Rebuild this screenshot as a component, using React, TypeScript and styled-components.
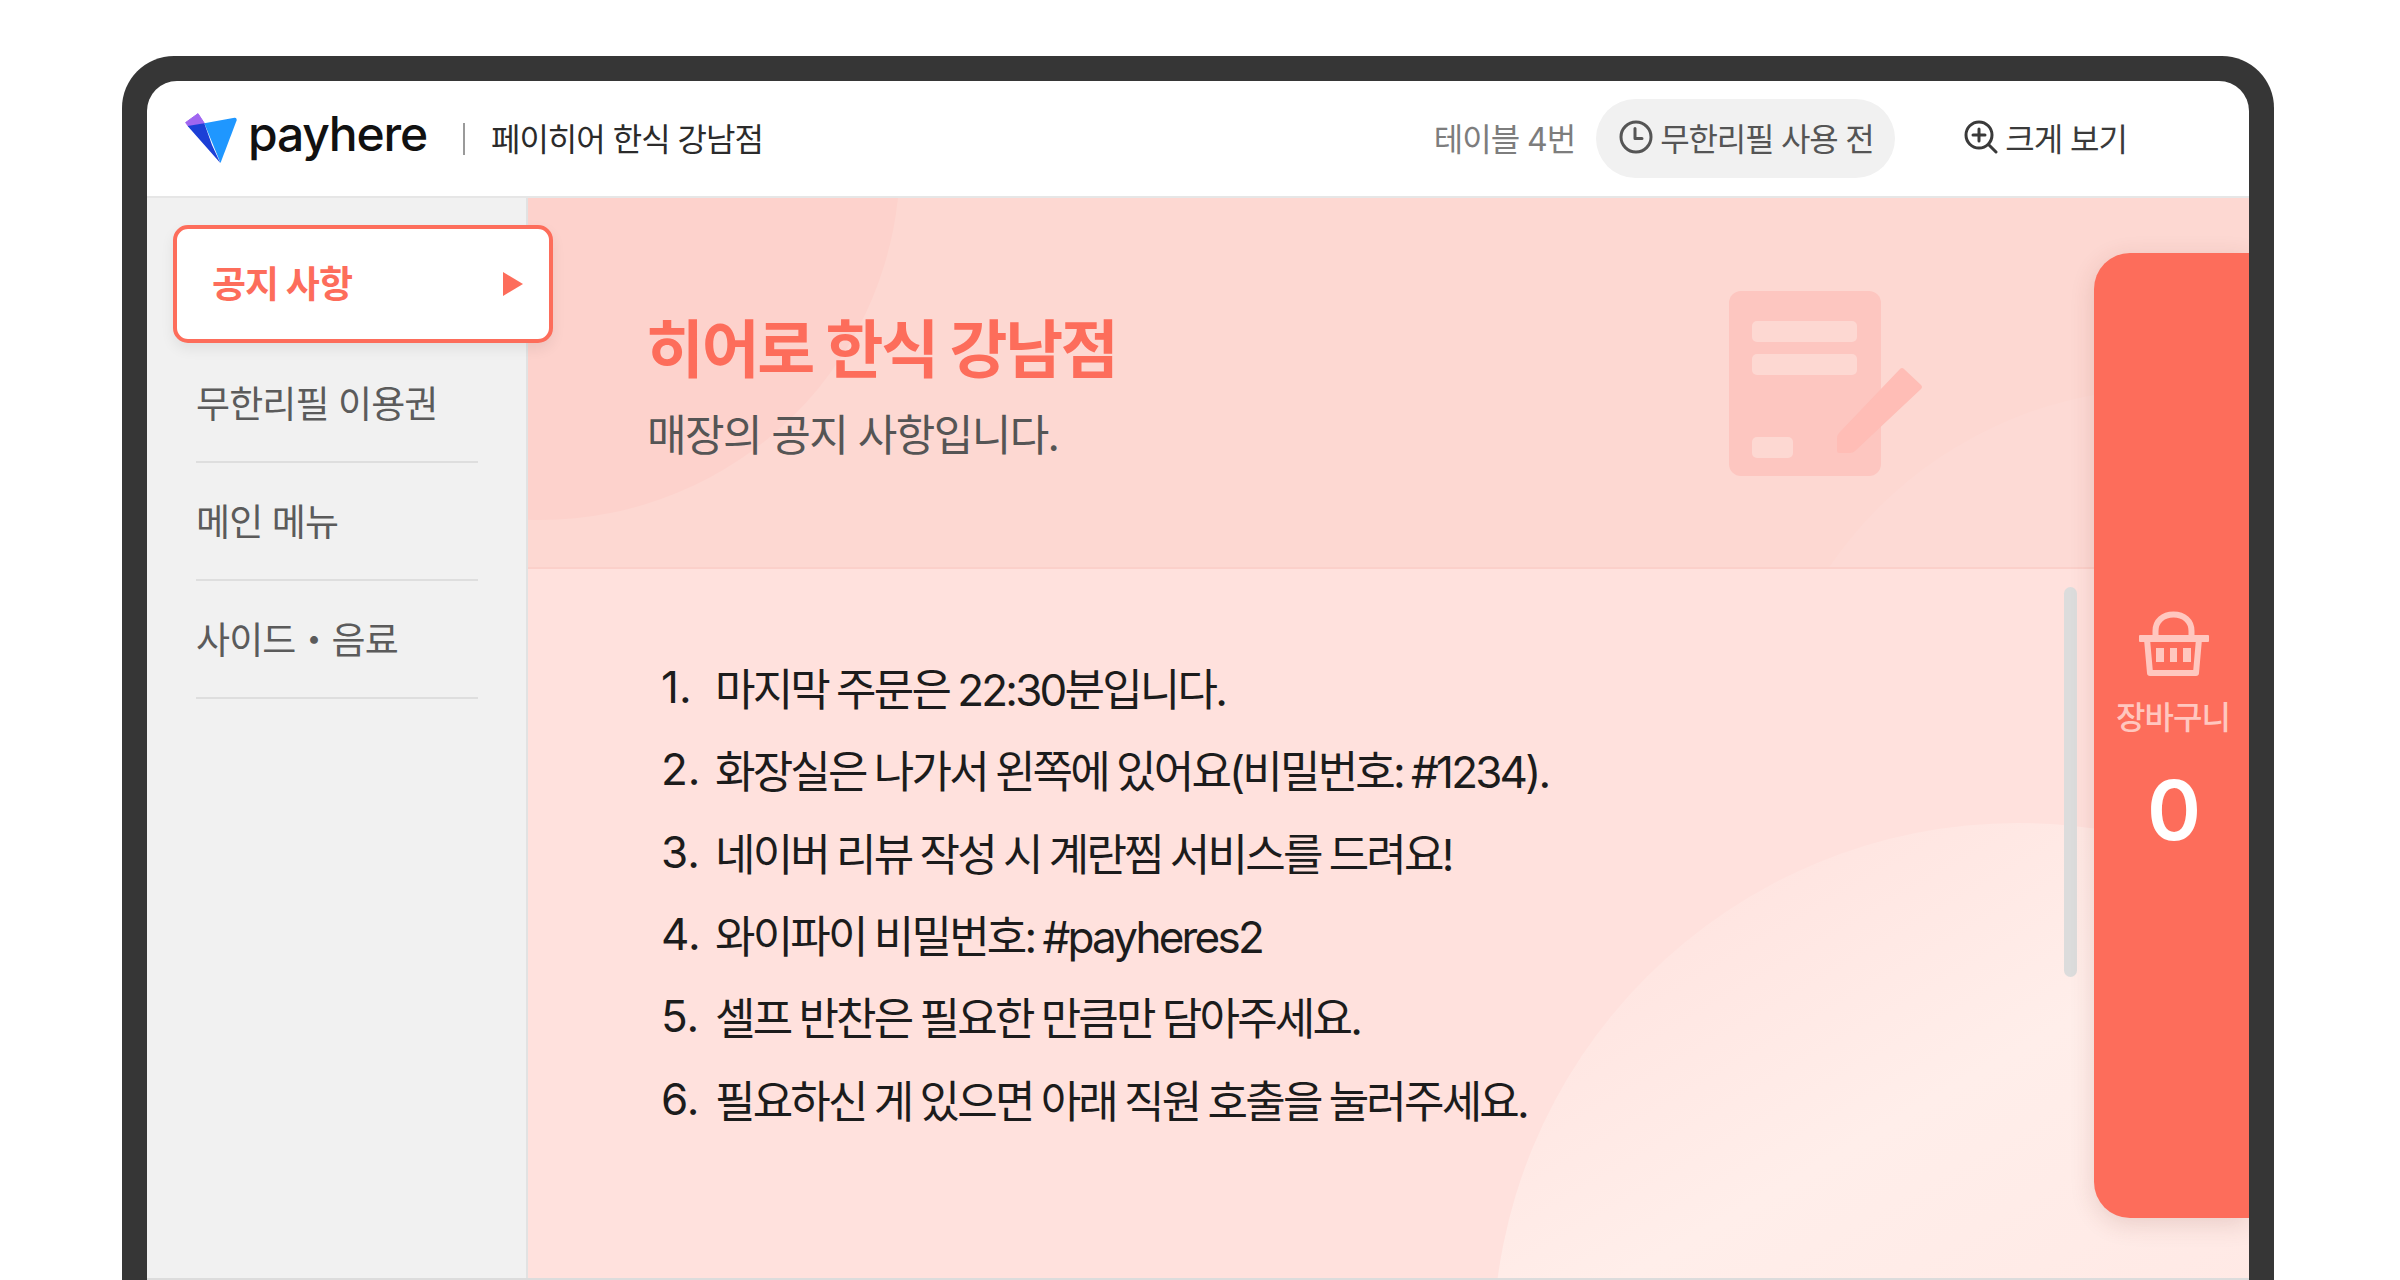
import React from "react";
import styled, { createGlobalStyle } from "styled-components";

const Global = createGlobalStyle`
  html, body { margin: 0; padding: 0; background: #fff; overflow: hidden; }
  body { font-family: Inter, "Noto Sans CJK KR", "Noto Sans", sans-serif; }
  * { box-sizing: border-box; }
`;

const Page = styled.div`
  width: 2400px;
  height: 1280px;
  padding: 56px 126px 0 122px;
  overflow: hidden;
`;

const Frame = styled.div`
  height: 1224px;
  background: #363636;
  border-radius: 52px 52px 0 0;
  padding: 25px 25px 0 25px;
`;

const Screen = styled.div`
  height: 100%;
  background: #fff;
  border-radius: 30px 30px 0 0;
  border-bottom: 2px solid #dcdcdc;
  display: flex;
  flex-direction: column;
  overflow: hidden;
`;

const Header = styled.header`
  flex: 0 0 117px;
  display: flex;
  align-items: center;
  padding: 0 122px 0 38px;
  border-bottom: 2px solid #e6e6e6;
`;

const LogoMark = styled.svg`
  width: 52px;
  height: 51px;
  flex: none;
`;

const LogoText = styled.span`
  margin-left: 11px;
  font-family: Inter, sans-serif;
  font-size: 48px;
  font-weight: 500;
  letter-spacing: -1.2px;
  color: #111;
  line-height: 1;
  position: relative;
  top: -5px;
`;

const Separator = styled.span`
  width: 2px;
  height: 32px;
  background: #9a9a9a;
  margin: 0 26px 0 36px;
`;

const StoreName = styled.span`
  padding-bottom: 3px;
  font-size: 32px;
  letter-spacing: -1px;
  color: #2b2b2b;
`;

const TableNo = styled.span`
  margin-left: auto;
  padding-bottom: 3px;
  font-size: 32px;
  letter-spacing: -1px;
  color: #7d7d7d;
`;

const RefillPill = styled.div`
  height: 79px;
  width: 299px;
  margin-left: 21px;
  border-radius: 40px;
  background: #f1f1f1;
  display: flex;
  align-items: center;
  padding: 0 0 3px 23px;
  gap: 7px;
  font-size: 32px;
  letter-spacing: -1.2px;
  color: #555;
`;

const ZoomButton = styled.div`
  margin-left: 69px;
  padding-bottom: 3px;
  display: flex;
  align-items: center;
  gap: 7px;
  font-size: 32px;
  letter-spacing: -1px;
  color: #3a3a3a;
`;

const Body = styled.div`
  flex: 1;
  min-height: 0;
  display: flex;
  position: relative;
`;

const Sidebar = styled.nav`
  flex: 0 0 381px;
  min-width: 0;
  background: #f1f1f1;
  border-right: 2px solid #e2e2e2;
  padding: 27px 0 0 26px;
  position: relative;
  z-index: 2;
`;

const ActiveItem = styled.div`
  width: 380px;
  height: 118px;
  margin-bottom: 2px;
  background: #fff;
  border: 4px solid #fd6d5b;
  border-radius: 15px;
  box-shadow: 0 6px 14px rgba(0, 0, 0, 0.07);
  display: flex;
  align-items: center;
  justify-content: space-between;
  padding: 0 26px 5px 35px;
  font-size: 37px;
  font-weight: 700;
  letter-spacing: -1px;
  color: #fd6d5b;
`;

const Arrow = styled.svg`
  width: 20px;
  height: 24px;
  margin-top: 5px;
`;

const MenuItem = styled.div`
  width: 282px;
  margin-left: 23px;
  height: 118px;
  padding-bottom: 2px;
  display: flex;
  align-items: center;
  border-bottom: 2px solid #dedede;
  font-size: 37px;
  letter-spacing: -0.9px;
  color: #5b5b5b;
`;

const Content = styled.main`
  flex: 1;
  min-width: 0;
  position: relative;
  overflow: hidden;
  display: flex;
  flex-direction: column;
  background: #ffe1dd;
`;

const Hero = styled.section`
  flex: 0 0 371px;
  position: relative;
  overflow: hidden;
  display: flex;
  align-items: center;
  padding: 0 326px 0 118px;
  background: #fdd8d2;
  border-bottom: 2px solid #fbd0ca;
`;

const Blob = styled.div<{ $size: number; $x: number; $y: number; $color: string }>`
  position: absolute;
  width: ${(p) => p.$size}px;
  height: ${(p) => p.$size}px;
  left: ${(p) => p.$x}px;
  top: ${(p) => p.$y}px;
  border-radius: 50%;
  background: ${(p) => p.$color};
`;

const HeroText = styled.div`
  position: relative;
  padding-top: 8px;
`;

const Title = styled.h1`
  margin: 0;
  font-size: 63px;
  line-height: 78px;
  font-weight: 700;
  letter-spacing: -2.3px;
  color: #fd6d5b;
`;

const Subtitle = styled.p`
  margin: 19px 0 0 1px;
  font-size: 43px;
  line-height: 56px;
  letter-spacing: -1.6px;
  color: #555;
`;

const DocIcon = styled.svg`
  position: relative;
  margin: 2px 0 0 auto;
  width: 194px;
  height: 186px;
  flex: none;
`;

const Notices = styled.section`
  position: relative;
  flex: 1;
  padding: 77px 0 0 133px;
`;

const Row = styled.div`
  display: flex;
  height: 82.3px;
  align-items: center;
  font-size: 44px;
  letter-spacing: -2.8px;
  word-spacing: -1.5px;
  color: #1c1c1c;
  white-space: nowrap;
`;

const Num = styled.span`
  width: 54px;
  letter-spacing: 0;
`;

const Scrollbar = styled.div`
  position: absolute;
  left: 1536px;
  top: 389px;
  width: 13px;
  height: 390px;
  border-radius: 7px;
  background: #dcdcdc;
`;

const Cart = styled.aside`
  position: absolute;
  right: 0;
  top: 55px;
  width: 155px;
  height: 965px;
  background: #fd6d5b;
  border-radius: 36px 0 0 36px;
  box-shadow: 0 6px 24px rgba(120, 50, 40, 0.16);
  display: flex;
  flex-direction: column;
  align-items: center;
  padding: 358px 0 0 5px;
  z-index: 3;
`;

const Basket = styled.svg`
  width: 70px;
  height: 66px;
`;

const CartLabel = styled.span`
  margin: 17px 2px 0 0;
  font-size: 32px;
  line-height: 48px;
  font-weight: 500;
  letter-spacing: -1px;
  color: #ffc7bf;
`;

const CartCount = styled.span`
  margin-top: 19px;
  font-size: 82px;
  line-height: 100px;
  font-weight: 600;
  color: #fff;
`;

const notices = [
  "마지막 주문은 22:30분입니다.",
  "화장실은 나가서 왼쪽에 있어요(비밀번호: #1234).",
  "네이버 리뷰 작성 시 계란찜 서비스를 드려요!",
  "와이파이 비밀번호: #payheres2",
  "셀프 반찬은 필요한 만큼만 담아주세요.",
  "필요하신 게 있으면 아래 직원 호출을 눌러주세요.",
];

export default function App() {
  return (
    <Page>
      <Global />
      <Frame>
        <Screen>
          <Header>
            <LogoMark viewBox="0 0 52 51">
              <path d="M0.6 9.5 13 0.6 19.5 10.5 3.5 13.5Z" fill="#a066f0" stroke="#a066f0" strokeLinejoin="round" />
              <path d="M19.3 10.3 49.5 4.8Q52 4.6 51.6 7.5L35.5 50Z" fill="#1f97ff" />
              <path d="M2.6 13 19.3 10.3 27 32 35.3 50Z" fill="#1c3fd6" />
            </LogoMark>
            <LogoText>payhere</LogoText>
            <Separator />
            <StoreName>페이히어 한식 강남점</StoreName>
            <TableNo>테이블 4번</TableNo>
            <RefillPill>
              <svg width="34" height="34" viewBox="0 0 34 34" fill="none" stroke="#555" strokeWidth="3" strokeLinecap="round" strokeLinejoin="round">
                <circle cx="17" cy="17" r="15" />
                <path d="M16 8.5V18.5H23" />
              </svg>
              무한리필 사용 전
            </RefillPill>
            <ZoomButton>
              <svg width="34" height="34" viewBox="0 0 34 34" fill="none" stroke="#3a3a3a" strokeWidth="3" strokeLinecap="round">
                <circle cx="15" cy="15" r="13" />
                <path d="M15 9V21M9 15H21" />
                <path d="M25 25 32 32" />
              </svg>
              크게 보기
            </ZoomButton>
          </Header>
          <Body>
            <Sidebar>
              <ActiveItem>
                공지 사항
                <Arrow viewBox="0 0 20 24">
                  <path d="M0 0 20 12 0 24Z" fill="#fd6d5b" />
                </Arrow>
              </ActiveItem>
              <MenuItem>무한리필 이용권</MenuItem>
              <MenuItem>메인 메뉴</MenuItem>
              <MenuItem>사이드・음료</MenuItem>
            </Sidebar>
            <Content>
              <Blob $size={1050} $x={965} $y={625} $color="linear-gradient(150deg, #ffe3df 8%, #ffeeea 32%, #ffe9e5 55%)" />
              <Hero>
                <Blob $size={720} $x={-348} $y={-398} $color="#fdd2cc" />
                <Blob $size={820} $x={1230} $y={190} $color="#fddad5" />
                <HeroText>
                  <Title>히어로 한식 강남점</Title>
                  <Subtitle>매장의 공지 사항입니다.</Subtitle>
                </HeroText>
                <DocIcon viewBox="0 0 194 186">
                  <rect x="0" y="0" width="152" height="185" rx="12" fill="#fdc6c0" />
                  <rect x="23" y="30" width="105" height="21" rx="5" fill="#fdd8d2" />
                  <rect x="23" y="63" width="105" height="21" rx="5" fill="#fdd8d2" />
                  <rect x="23" y="146" width="41" height="21" rx="5" fill="#fdd8d2" />
                  <path d="M175 78 192 94Q194 96 192 98L126 160Q124 162 121 162H110Q108 162 108 160V148Q108 144 110 142L171 78Q173 76 175 78Z" fill="#ffbdb6" />
                </DocIcon>
              </Hero>
              <Notices>
                {notices.map((text, i) => (
                  <Row key={text}>
                    <Num>{i + 1}.</Num>
                    <span>{text}</span>
                  </Row>
                ))}
              </Notices>
              <Scrollbar />
              <Cart>
                <Basket viewBox="0 0 70 66" fill="none">
                  <path d="M16.5 26V20C16.5 10 24 3.5 34.5 3.5S52.5 10 52.5 20V26" stroke="#ffc7bf" strokeWidth="6" />
                  <rect x="0" y="24" width="70" height="7" rx="1" fill="#ffc7bf" />
                  <path d="M8 28 11 62H57L60 28" stroke="#ffc7bf" strokeWidth="6" strokeLinejoin="round" />
                  <rect x="17" y="37" width="8" height="14" fill="#ffc7bf" />
                  <rect x="31" y="37" width="7" height="14" fill="#ffc7bf" />
                  <rect x="44" y="37" width="8" height="14" fill="#ffc7bf" />
                </Basket>
                <CartLabel>장바구니</CartLabel>
                <CartCount>0</CartCount>
              </Cart>
            </Content>
          </Body>
        </Screen>
      </Frame>
    </Page>
  );
}
